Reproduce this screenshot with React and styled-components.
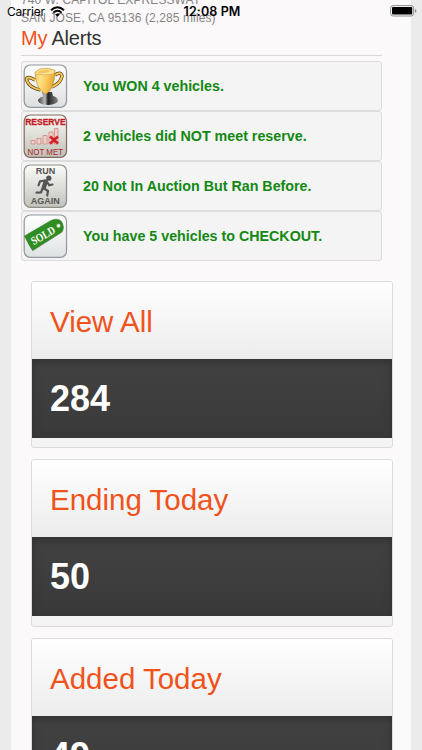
import React from "react";
import styled, { createGlobalStyle } from "styled-components";

const GlobalStyle = createGlobalStyle`
  * { box-sizing: border-box; }
  html, body { margin: 0; height: 750px; overflow: hidden; background: #ebebeb; }
  body { font-family: "Liberation Sans", Arial, sans-serif; }
`;

const Screen = styled.div`
  position: relative;
  width: 422px;
  height: 750px;
  overflow: hidden;
  background: #ebebeb;
`;

const StatusBar = styled.header`
  position: absolute;
  inset: 0 0 auto 0;
  height: 22px;
  padding: 0 5px 0 7px;
  display: grid;
  grid-template-columns: 1fr auto 1fr;
  align-items: center;
  font-family: Inter, sans-serif;
  color: #000;
`;

const Carrier = styled.div`
  display: flex;
  align-items: center;
  gap: 5.5px;
  font-size: 12px;
  letter-spacing: -0.2px;
`;

const Clock = styled.div`
  font-size: 12.5px;
  font-weight: 600;
  letter-spacing: 0.12px;
`;

const BatterySlot = styled.div`
  display: flex;
  justify-content: flex-end;
`;

const Page = styled.main`
  width: 400px;
  height: 750px;
  margin-left: 11px;
  padding-left: 10px;
  overflow: hidden;
  background: #fbf9fa;
`;

const Address = styled.address`
  margin-top: -9px;
  height: 35px;
  font-style: normal;
  font-size: 12px;
  line-height: 18px;
  letter-spacing: 0.1px;
  color: #858386;
  white-space: nowrap;
`;

const Heading = styled.h1`
  width: 361px;
  height: 30px;
  margin: 0 0 5px;
  border-bottom: 1px solid #d9d7d9;
  font-size: 20px;
  line-height: 25px;
  font-weight: 400;
  letter-spacing: -0.22px;
  color: #333;
`;

const Accent = styled.span`
  color: #f0521c;
`;

const AlertList = styled.ul`
  width: 361px;
  margin: 0;
  padding: 0;
  list-style: none;
`;

const AlertRow = styled.li`
  display: flex;
  align-items: center;
  gap: 15px;
  height: 50px;
  padding-left: 1px;
  border: 1px solid #dedcdc;
  border-radius: 3px;
  background: #f4f4f4;
  color: #138813;
`;

const AlertText = styled.span`
  padding-bottom: 1px;
  font-size: 14.27px;
  font-weight: 700;
`;

const CardList = styled.section`
  display: flex;
  flex-direction: column;
  gap: 11px;
  margin: 20px 0 0 9.5px;
`;

const Card = styled.article`
  flex: none;
  width: 362px;
  height: 167.3px;
  border: 1px solid #dddcdd;
  border-radius: 3px;
  background: #f4f4f4;
  overflow: hidden;
`;

const CardTitle = styled.h2`
  height: 77px;
  margin: 0;
  padding: 2px 0 0 18.5px;
  background: linear-gradient(#fff, #ececec);
  font-size: 29.5px;
  line-height: 76px;
  font-weight: 400;
  color: #f0521c;
`;

const CardCount = styled.div`
  height: 79px;
  padding-left: 18.5px;
  background: linear-gradient(#424242, #393939);
  box-shadow: inset 0 3px 9px #303030;
  font-size: 36px;
  line-height: 79px;
  font-weight: 700;
  color: #fff;
`;

const IconSvg = styled.svg`
  display: block;
  flex: none;
`;

const WifiIcon = () => (
  <IconSvg width="15" height="11" viewBox="0 0 15 11" fill="none" stroke="#000">
    <path d="M1 4.2Q7.5-1.6 14 4.2" strokeWidth="2" />
    <path d="M3.3 6.6Q7.5 3 11.7 6.6" strokeWidth="1.9" />
    <path d="M5.2 8.4Q7.5 6.6 9.8 8.4L7.5 10.7Z" fill="#000" stroke="none" />
  </IconSvg>
);

const BatteryIcon = () => (
  <IconSvg width="27" height="12" viewBox="0 0 27 12">
    <rect x=".6" y=".6" width="23" height="10.4" rx="2.5" fill="none" stroke="#8e8e8e" />
    <rect x="2" y="2" width="20.2" height="7.6" rx="1" />
    <path d="M25 4v3.8q1.5-.5 1.5-1.9T25 4" fill="#8e8e8e" />
  </IconSvg>
);

const Tile = ({ id, stops, stroke, children }) => (
  <IconSvg width="45" height="45" viewBox="0 0 45 45">
    <defs>
      <linearGradient id={id} x2="0" y2="1">
        <stop stopColor={stops[0]} />
        <stop offset="1" stopColor={stops[1]} />
      </linearGradient>
    </defs>
    <rect x="1.2" y="1" width="42.3" height="42.3" rx="6" fill={`url(#${id})`} stroke={stroke} strokeWidth="1.2" />
    {children}
  </IconSvg>
);

const TrophyIcon = () => (
  <Tile id="trophyTile" stops={["#fff", "#dcdfe1"]} stroke="#92989c">
    <defs>
      <linearGradient id="gold" x2="1" y2=".3">
        <stop stopColor="#f3bd46" />
        <stop offset=".35" stopColor="#ffe18b" />
        <stop offset=".65" stopColor="#fbcb5c" />
        <stop offset="1" stopColor="#e5a935" />
      </linearGradient>
      <linearGradient id="base" x2="1">
        <stop stopColor="#444" />
        <stop offset=".35" stopColor="#bbb" />
        <stop offset=".5" stopColor="#222" />
        <stop offset="1" stopColor="#888" />
      </linearGradient>
    </defs>
    <path d="M19 28l10 0 1 4q5 1 5 5-1 3-9.500 4-8.500 0-10.500-4 0-3 5-4.500z" fill="url(#base)" />
    <path d="M12 16Q3 11 3.500 16q3 8 14 10M32 11q6-4 7 1-1 7-10 11" fill="none" stroke="#57431e" strokeWidth="3.500" />
    <path d="M12 16Q3 11 3.500 16q3 8 14 10M32 11q6-4 7 1-1 7-10 11" fill="none" stroke="#f3c453" strokeWidth="2.100" />
    <path d="M12 8.500Q19 1.500 32 6.500q0 10-3 16-2 5-4 6l-2 1.500-2 0-1-2q-7-4-8-19.500" fill="url(#gold)" stroke="#a87d2c" strokeWidth=".5" />
    <path d="M12 8.500Q18 1.500 31 6q2 2-1 4-7 2-17.500 0z" fill="#ffe392" stroke="#d09c3a" strokeWidth=".6" />
    <path d="M14.500 8q6-4 13.500-1-5 2.700-12.500 2.200z" fill="#f4c662" />
  </Tile>
);

const ReserveIcon = () => (
  <Tile id="reserveTile" stops={["#fafaf6", "#bfc0b6"]} stroke="#806a61">
    <text x="22.400" y="11.200" textAnchor="middle" textLength="40.500" lengthAdjust="spacingAndGlyphs" fontSize="9.600" fontWeight="700" fill="#c21925" stroke="#c21925" strokeWidth=".3">RESERVE</text>
    <g fill="#efd0cb" stroke="#d68580" strokeWidth=".8">
      <path d="M8 26.500h4v3.500h-4zM14 24.500h4v5.500h-4zM20 21.500h4v8.500h-4zM26 18h4v12h-4zM31.500 14.500h3.500v15.500h-3.500z" />
    </g>
    <path d="M27 22.500l8 7m0-7l-8 7" stroke="#d3202b" strokeWidth="2.700" />
    <text x="22.300" y="41.200" textAnchor="middle" textLength="35.500" lengthAdjust="spacingAndGlyphs" fontSize="9.800" fill="#b1232a">NOT MET</text>
  </Tile>
);

const RunIcon = () => (
  <Tile id="runTile" stops={["#fbfbf9", "#c2c3bc"]} stroke="#8d8e86">
    <g fill="#555553" fontSize="9.800" fontWeight="700" textAnchor="middle">
      <text x="22.600" y="10" textLength="19.500" lengthAdjust="spacingAndGlyphs">RUN</text>
      <text x="22.300" y="40.300" textLength="29" lengthAdjust="spacingAndGlyphs">AGAIN</text>
    </g>
    <circle cx="25.800" cy="14.200" r="2.600" fill="#555" />
    <path d="M22.800 17.500l-2 6" stroke="#555" strokeWidth="4.300" strokeLinecap="round" />
    <path d="M22 16.500l-5 .8-1.500 4M24.500 18.500l1.800 2.800 3.200-.8M21 24.500l4 2.500-.8 4.500M19.500 24.500l-1.500 4-4.500.2" fill="none" stroke="#555" strokeWidth="2.200" strokeLinecap="round" strokeLinejoin="round" />
  </Tile>
);

const SoldIcon = () => (
  <Tile id="soldTile" stops={["#fff", "#dfe2e4"]} stroke="#92989c">
    <path d="M2.500 24L29 8q6-3 10 1 3 5-1 10L10 37.500z" fill="#aaa" opacity=".5" />
    <path d="M1.500 22L28 6.500q7-3 10.500 1 3.500 6 .5 10.500L9.500 36.500q-4-6-8-14.500" fill="#2f8d22" stroke="#217619" strokeWidth=".5" />
    <circle cx="35.500" cy="11.800" r="1.700" fill="#f5f5f5" stroke="#c2d8bd" strokeWidth=".6" />
    <text x="20" y="25.300" transform="rotate(-30 20 21.500)" textAnchor="middle" textLength="26" lengthAdjust="spacingAndGlyphs" fontFamily="Liberation Serif, serif" fontWeight="700" fontSize="11.500" fill="#fff">SOLD</text>
  </Tile>
);

const alerts = [
  { Icon: TrophyIcon, text: "You WON 4 vehicles." },
  { Icon: ReserveIcon, text: "2 vehicles did NOT meet reserve." },
  { Icon: RunIcon, text: "20 Not In Auction But Ran Before." },
  { Icon: SoldIcon, text: "You have 5 vehicles to CHECKOUT." },
];

const cards = [
  { title: "View All", count: 284 },
  { title: "Ending Today", count: 50 },
  { title: "Added Today", count: 49 },
];

export default function App() {
  return (
    <Screen>
      <GlobalStyle />
      <Page>
        <Address>
          740 W. CAPITOL EXPRESSWAY
          <br />
          SAN JOSE, CA 95136 (2,285 miles)
        </Address>
        <Heading>
          <Accent>My</Accent> Alerts
        </Heading>
        <AlertList>
          {alerts.map(({ Icon, text }) => (
            <AlertRow key={text}>
              <Icon />
              <AlertText>{text}</AlertText>
            </AlertRow>
          ))}
        </AlertList>
        <CardList>
          {cards.map(({ title, count }) => (
            <Card key={title}>
              <CardTitle>{title}</CardTitle>
              <CardCount>{count}</CardCount>
            </Card>
          ))}
        </CardList>
      </Page>
      <StatusBar>
        <Carrier>
          Carrier
          <WifiIcon />
        </Carrier>
        <Clock>12:08 PM</Clock>
        <BatterySlot>
          <BatteryIcon />
        </BatterySlot>
      </StatusBar>
    </Screen>
  );
}
